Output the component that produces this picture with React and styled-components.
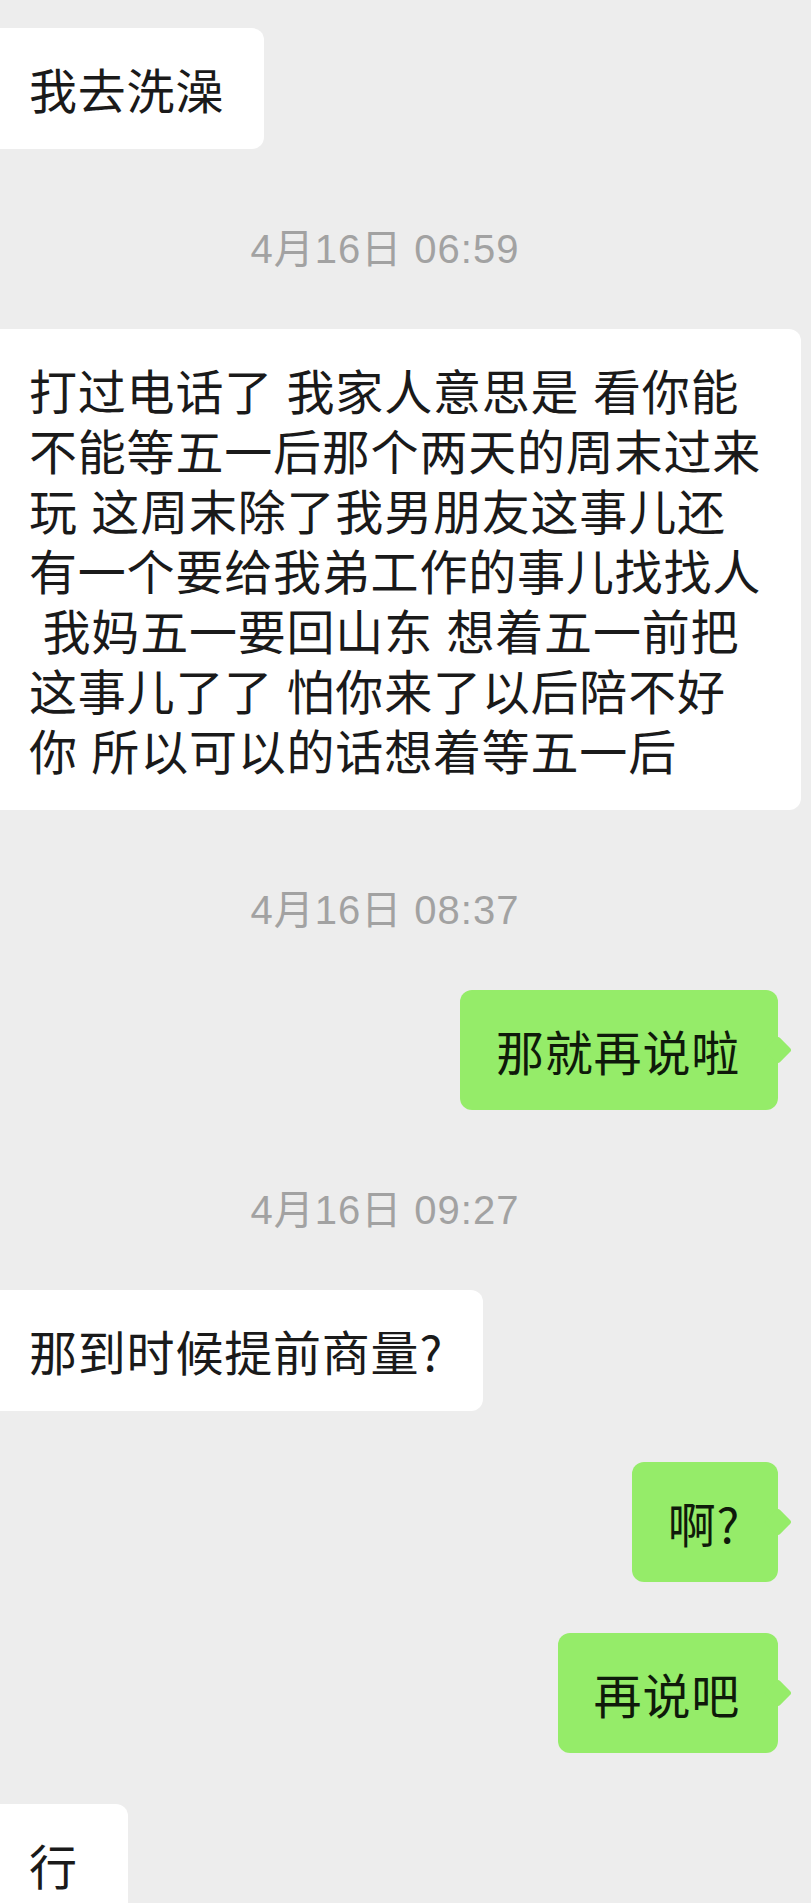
import React from "react";
import styled, { createGlobalStyle } from "styled-components";

const GlobalStyle = createGlobalStyle`
  html, body {
    margin: 0;
    padding: 0;
    background: #ededed;
    overflow: hidden;
  }
`;

const Chat = styled.div`
  height: 100vh;
  overflow: hidden;
  box-sizing: border-box;
  padding-top: 28px;
  display: flex;
  flex-direction: column;
  gap: 51px;
  background: #ededed;
  font-family: "Noto Sans CJK SC", "Noto Sans", sans-serif;
`;

const TimeRow = styled.div`
  height: 50px;
  margin: 21px 0 7px;
  padding-right: 41px;
  display: flex;
  justify-content: center;
  align-items: center;
  font-family: "Liberation Sans", "Noto Sans CJK SC", sans-serif;
  font-size: 40px;
  letter-spacing: 1px;
  color: #a2a2a2;
`;

const Row = styled.div`
  display: flex;
  flex-shrink: 0;
  justify-content: ${({ $mine }) => ($mine ? "flex-end" : "flex-start")};
  padding-right: ${({ $mine }) => ($mine ? "33px" : "0")};
`;

const Bubble = styled.div`
  position: relative;
  box-sizing: border-box;
  min-width: 128px;
  font-size: 48px;
  line-height: 60px;
  letter-spacing: 0.8px;
  word-spacing: 2px;
  white-space: pre;
  color: ${({ $mine }) => ($mine ? "#0f1a0a" : "#1a1a1a")};
  background: ${({ $mine }) => ($mine ? "#95ec69" : "#ffffff")};
  border-radius: ${({ $mine }) => ($mine ? "12px" : "0 12px 12px 0")};
  padding: ${({ $mine }) => ($mine ? "30px 38px 30px 36px" : "30px 40px 31px 29px")};

  ${({ $mine }) =>
    $mine &&
    `
    &::after {
      content: "";
      position: absolute;
      right: 0;
      top: 50%;
      width: 20px;
      height: 20px;
      background: #95ec69;
      border-radius: 3px;
      transform: translate(50%, -50%) rotate(45deg);
    }
  `}
`;

const messages = [
  { type: "msg", mine: false, text: "我去洗澡" },
  { type: "time", text: "4月16日 06:59" },
  {
    type: "msg",
    mine: false,
    text: [
      "打过电话了 我家人意思是 看你能",
      "不能等五一后那个两天的周末过来",
      "玩 这周末除了我男朋友这事儿还",
      "有一个要给我弟工作的事儿找找人",
      " 我妈五一要回山东 想着五一前把",
      "这事儿了了 怕你来了以后陪不好",
      "你 所以可以的话想着等五一后",
    ].join("\n"),
  },
  { type: "time", text: "4月16日 08:37" },
  { type: "msg", mine: true, text: "那就再说啦" },
  { type: "time", text: "4月16日 09:27" },
  { type: "msg", mine: false, text: "那到时候提前商量?" },
  { type: "msg", mine: true, text: "啊?" },
  { type: "msg", mine: true, text: "再说吧" },
  { type: "msg", mine: false, text: "行" },
];

export default function App() {
  return (
    <>
      <GlobalStyle />
      <Chat>
        {messages.map((m, i) =>
          m.type === "time" ? (
            <TimeRow key={i}>{m.text}</TimeRow>
          ) : (
            <Row key={i} $mine={m.mine}>
              <Bubble $mine={m.mine}>{m.text}</Bubble>
            </Row>
          )
        )}
      </Chat>
    </>
  );
}
